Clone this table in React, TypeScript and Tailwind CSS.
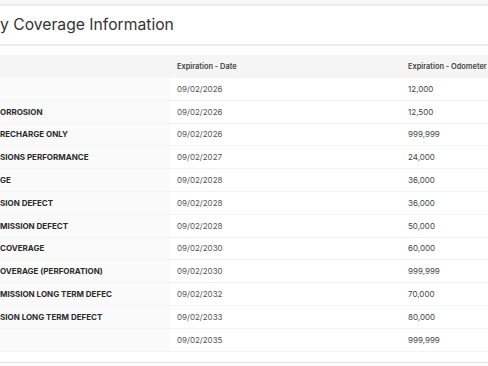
const rows = [
  { name: "", date: "09/02/2026", odo: "12,000" },
  { name: "ORROSION", date: "09/02/2026", odo: "12,500" },
  { name: "RECHARGE ONLY", date: "09/02/2026", odo: "999,999" },
  { name: "SIONS PERFORMANCE", date: "09/02/2027", odo: "24,000" },
  { name: "GE", date: "09/02/2028", odo: "36,000" },
  { name: "SION DEFECT", date: "09/02/2028", odo: "36,000" },
  { name: "MISSION DEFECT", date: "09/02/2028", odo: "50,000" },
  { name: "COVERAGE", date: "09/02/2030", odo: "60,000" },
  { name: "OVERAGE (PERFORATION)", date: "09/02/2030", odo: "999,999" },
  { name: "MISSION LONG TERM DEFEC", date: "09/02/2032", odo: "70,000" },
  { name: "SION LONG TERM DEFECT", date: "09/02/2033", odo: "80,000" },
  { name: "", date: "09/02/2035", odo: "999,999" },
];

export default function App() {
  return (
    <div className="w-[488px] h-[366px] overflow-hidden bg-white font-['Inter',sans-serif]">
      <div className="h-[4px] bg-[#f7f7f7]" />
      <div className="border-t-2 border-b-2 border-[#ebebeb] h-[42px] flex items-center">
        <h2 className="whitespace-nowrap text-[15.7px] text-[#333]">
          y Coverage Information
        </h2>
      </div>
      <div className="h-[9px]" />
      <div className="grid grid-cols-[170px_231px_1fr] h-[23px] bg-[#f5f5f5] items-center text-[7.4px] font-semibold text-[#444] whitespace-nowrap">
        <div />
        <div className="pl-[7px]">Expiration - Date</div>
        <div className="pl-[7px]">Expiration - Odometer</div>
      </div>
      {rows.map((r, i) => (
        <div
          key={i}
          className="grid grid-cols-[170px_231px_1fr] h-[22.8px] border-b border-[#f2f2f2] text-[8px] whitespace-nowrap"
        >
          <div className="flex items-center bg-[#fafafa] font-bold text-[#2b2b2b]">
            {r.name}
          </div>
          <div className="flex items-center pl-[7px] text-[#555]">{r.date}</div>
          <div className="flex items-center pl-[7px] text-[#444]">{r.odo}</div>
        </div>
      ))}
      <div className="h-[10px]" />
      <div className="border-t border-[#e2e2e2]" />
    </div>
  );
}
